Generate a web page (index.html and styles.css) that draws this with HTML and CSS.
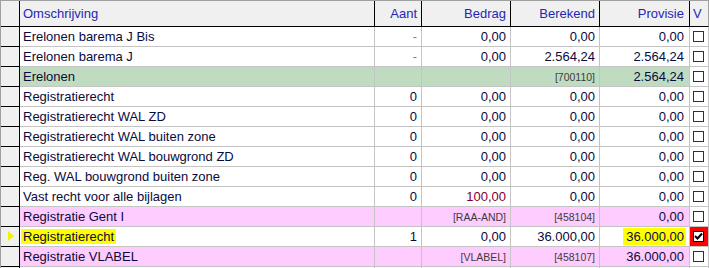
FILE: index.html
```html
<!DOCTYPE html>
<html>
<head>
<meta charset="utf-8">
<link rel="stylesheet" href="styles.css">
</head>
<body>
<div class="grid">
  <div class="row head">
    <div class="c ind"></div>
    <div class="c om">Omschrijving</div>
    <div class="c aa r">Aant</div>
    <div class="c be r">Bedrag</div>
    <div class="c bk r">Berekend</div>
    <div class="c pr r">Provisie</div>
    <div class="c v">V</div>
  </div>
  <div class="row">
    <div class="c ind"></div>
    <div class="c om">Erelonen barema J Bis</div>
    <div class="c aa r"><span class="dash">-</span></div>
    <div class="c be r">0,00</div>
    <div class="c bk r">0,00</div>
    <div class="c pr r">0,00</div>
    <div class="c v"><span class="cb"></span></div>
  </div>
  <div class="row">
    <div class="c ind"></div>
    <div class="c om">Erelonen barema J</div>
    <div class="c aa r"><span class="dash">-</span></div>
    <div class="c be r">0,00</div>
    <div class="c bk r">2.564,24</div>
    <div class="c pr r">2.564,24</div>
    <div class="c v"><span class="cb"></span></div>
  </div>
  <div class="row green">
    <div class="c ind"></div>
    <div class="c om">Erelonen</div>
    <div class="c aa r"></div>
    <div class="c be r"></div>
    <div class="c bk r"><span class="code">[700110]</span></div>
    <div class="c pr r">2.564,24</div>
    <div class="c v"><span class="cb"></span></div>
  </div>
  <div class="row">
    <div class="c ind"></div>
    <div class="c om">Registratierecht</div>
    <div class="c aa r">0</div>
    <div class="c be r">0,00</div>
    <div class="c bk r">0,00</div>
    <div class="c pr r">0,00</div>
    <div class="c v"><span class="cb"></span></div>
  </div>
  <div class="row">
    <div class="c ind"></div>
    <div class="c om">Registratierecht WAL ZD</div>
    <div class="c aa r">0</div>
    <div class="c be r">0,00</div>
    <div class="c bk r">0,00</div>
    <div class="c pr r">0,00</div>
    <div class="c v"><span class="cb"></span></div>
  </div>
  <div class="row">
    <div class="c ind"></div>
    <div class="c om">Registratierecht WAL buiten zone</div>
    <div class="c aa r">0</div>
    <div class="c be r">0,00</div>
    <div class="c bk r">0,00</div>
    <div class="c pr r">0,00</div>
    <div class="c v"><span class="cb"></span></div>
  </div>
  <div class="row">
    <div class="c ind"></div>
    <div class="c om">Registratierecht WAL bouwgrond ZD</div>
    <div class="c aa r">0</div>
    <div class="c be r">0,00</div>
    <div class="c bk r">0,00</div>
    <div class="c pr r">0,00</div>
    <div class="c v"><span class="cb"></span></div>
  </div>
  <div class="row">
    <div class="c ind"></div>
    <div class="c om">Reg. WAL bouwgrond buiten zone</div>
    <div class="c aa r">0</div>
    <div class="c be r">0,00</div>
    <div class="c bk r">0,00</div>
    <div class="c pr r">0,00</div>
    <div class="c v"><span class="cb"></span></div>
  </div>
  <div class="row">
    <div class="c ind"></div>
    <div class="c om">Vast recht voor alle bijlagen</div>
    <div class="c aa r">0</div>
    <div class="c be r"><span class="red">100,00</span></div>
    <div class="c bk r">0,00</div>
    <div class="c pr r">0,00</div>
    <div class="c v"><span class="cb"></span></div>
  </div>
  <div class="row pink">
    <div class="c ind"></div>
    <div class="c om">Registratie Gent I</div>
    <div class="c aa r"></div>
    <div class="c be r"><span class="code">[RAA-AND]</span></div>
    <div class="c bk r"><span class="code">[458104]</span></div>
    <div class="c pr r">0,00</div>
    <div class="c v"><span class="cb"></span></div>
  </div>
  <div class="row">
    <div class="c ind"><span class="tri"></span></div>
    <div class="c om"><span class="hl">Registratierecht</span></div>
    <div class="c aa r">1</div>
    <div class="c be r">0,00</div>
    <div class="c bk r">36.000,00</div>
    <div class="c pr r"><span class="hl2">36.000,00</span></div>
    <div class="c v checked"><span class="cb on"><svg width="9" height="9" viewBox="0 0 9 9"><polyline points="1,4 3.5,6.5 8,1.5" fill="none" stroke="#000" stroke-width="2"/></svg></span></div>
  </div>
  <div class="row pink">
    <div class="c ind"></div>
    <div class="c om">Registratie VLABEL</div>
    <div class="c aa r"></div>
    <div class="c be r"><span class="code">[VLABEL]</span></div>
    <div class="c bk r"><span class="code">[458107]</span></div>
    <div class="c pr r">36.000,00</div>
    <div class="c v"><span class="cb"></span></div>
  </div>
  <div class="row">
    <div class="c ind"></div>
    <div class="c om"></div>
    <div class="c aa r"></div>
    <div class="c be r"></div>
    <div class="c bk r"></div>
    <div class="c pr r"></div>
    <div class="c v"></div>
  </div>
</div>
</body>
</html>
```
FILE: styles.css
```css
html, body {
  margin: 0;
  padding: 0;
  background: #ffffff;
  overflow: hidden;
}
.grid {
  width: 709px;
  height: 268px;
  box-sizing: border-box;
  border-left: 1px solid #a0a0a0;
  border-top: 1px solid #a0a0a0;
  font-family: "Liberation Sans", Arial, sans-serif;
  font-size: 13px;
  color: #0a0a3c;
  overflow: hidden;
}
.row {
  display: flex;
  height: 20px;
}
.row.head {
  height: 26px;
  background: #f0f0f0;
}
.c {
  box-sizing: border-box;
  height: 100%;
  border-right: 1px solid #c4c4c4;
  border-bottom: 1px solid #c4c4c4;
  line-height: 19px;
  white-space: nowrap;
  overflow: hidden;
  padding: 0 4px 0 3px;
  flex: none;
}
.ind { width: 19px; padding: 0; background: #f0f0f0; border-color: #000; position: relative; }
.om { width: 355px; padding-left: 3px; }
.aa { width: 47px; }
.be { width: 89px; }
.bk { width: 89px; }
.pr { width: 90px; padding-right: 5px; }
.v { width: 19px; padding: 0 0 0 3px; background: #fff; border-right-color: #c4c4c4; }
.r { text-align: right; }

.head .c {
  border-color: #000;
  color: #2626b4;
  line-height: 25px;
}
.head .v { background: #f0f0f0; border-right-color: #a0a0a0; padding-left: 3px; }

.green .c:not(.ind):not(.v) { background: #c0dcc0; }
.pink .c:not(.ind):not(.v) { background: #ffccff; }

.dash { color: #c87800; }
.red { color: #800030; }
.code {
  font-size: 10.5px;
  color: #3c3c3c;
}
.hl {
  background: #ffff00;
  padding: 0 2px;
  margin-left: -2px;
}
.hl2 {
  display: inline-block;
  background: #ffff00;
  padding: 0 2px 0 3px;
  margin-right: -2px;
  line-height: 17px;
}
.cb {
  display: block;
  width: 11px;
  height: 11px;
  box-sizing: border-box;
  border: 1px solid #303030;
  background: #fff;
  margin-top: 4px;
  position: relative;
}
.cb svg { position: absolute; left: 0; top: 0; }
.cb.on { border-color: #000; }
.checked { background: #ff0000; }
.tri {
  position: absolute;
  left: 7px;
  top: 4px;
  width: 0;
  height: 0;
  border-top: 5.5px solid transparent;
  border-bottom: 5.5px solid transparent;
  border-left: 6px solid #f4f000;
}
```
